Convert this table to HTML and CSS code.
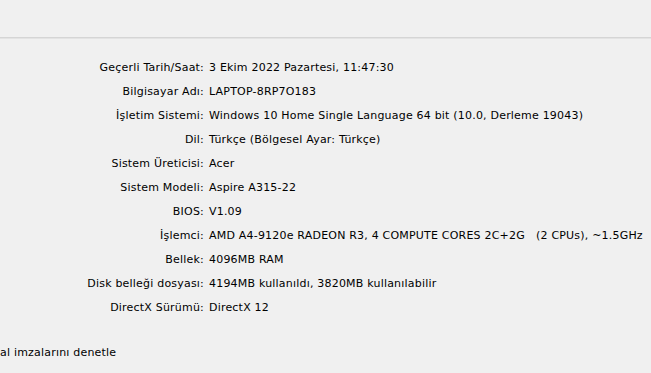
FILE: index.html
```html
<!DOCTYPE html>
<html>
	<head>
		<meta charset="UTF-8">
		<title>Sistem</title>
		<link rel="stylesheet" href="styles.css">
	</head>
	<body>
		<div class="top"></div>
		<div class="sep"></div>
		<dl class="info">
			<dt>Geçerli Tarih/Saat:</dt><dd>3 Ekim 2022 Pazartesi, 11:47:30</dd>
			<dt>Bilgisayar Adı:</dt><dd>LAPTOP-8RP7O183</dd>
			<dt>İşletim Sistemi:</dt><dd>Windows 10 Home Single Language 64 bit (10.0, Derleme 19043)</dd>
			<dt>Dil:</dt><dd>Türkçe (Bölgesel Ayar: Türkçe)</dd>
			<dt>Sistem Üreticisi:</dt><dd>Acer</dd>
			<dt>Sistem Modeli:</dt><dd>Aspire A315-22</dd>
			<dt>BIOS:</dt><dd>V1.09</dd>
			<dt>İşlemci:</dt><dd>AMD A4-9120e RADEON R3, 4 COMPUTE CORES 2C+2G&nbsp;&nbsp;&nbsp;(2 CPUs), ~1.5GHz</dd>
			<dt>Bellek:</dt><dd>4096MB RAM</dd>
			<dt>Disk belleği dosyası:</dt><dd>4194MB kullanıldı, 3820MB kullanılabilir</dd>
			<dt>DirectX Sürümü:</dt><dd>DirectX 12</dd>
		</dl>
		<div class="check">al imzalarını denetle</div>
	</body>
</html>
```

FILE: styles.css
```css
body{margin:0;padding:0;background:#f0f0f0;font-family:"DejaVu Sans",Tahoma,sans-serif;font-size:11px;letter-spacing:0.2px;color:#000;overflow:hidden;}
.top{height:37px;}
.sep{height:0;border-top:1px solid #d5d5d5;border-bottom:1px solid #e3e3e3;}
.info{display:grid;grid-template-columns:204px 1fr;column-gap:5px;margin:17px 0 0 0;}
.info dt,.info dd{margin:0;height:24px;line-height:24px;white-space:nowrap;}
.info dt{text-align:right;}
.check{margin-top:21px;line-height:24px;}
```
